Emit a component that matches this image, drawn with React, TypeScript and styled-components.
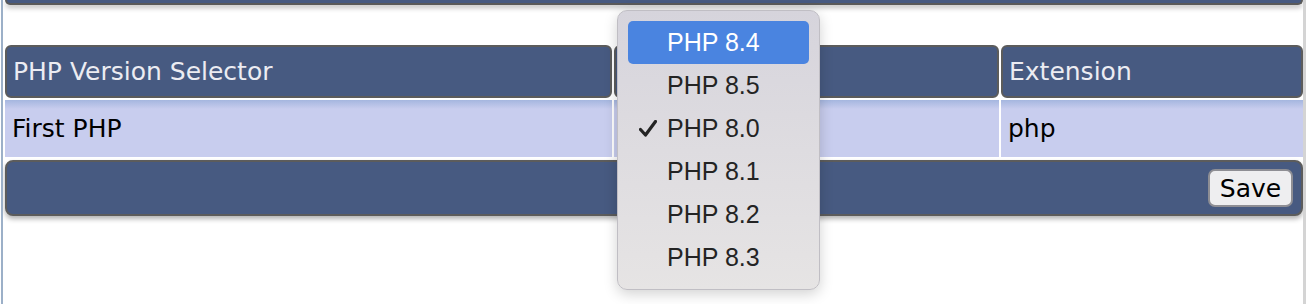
import styled, { createGlobalStyle } from 'styled-components';

const GlobalStyle = createGlobalStyle`
  html, body {
    margin: 0;
    padding: 0;
    background: #ffffff;
  }
  body {
    font-family: "DejaVu Sans", Verdana, sans-serif;
  }
`;

const versions = ['PHP 8.4', 'PHP 8.5', 'PHP 8.0', 'PHP 8.1', 'PHP 8.2', 'PHP 8.3'];
const highlighted = 'PHP 8.4';
const selected = 'PHP 8.0';

export default function App() {
  return (
    <>
      <GlobalStyle />
      <Frame>
        <TopBar />
        <Table>
          <HeadRow>
            <HeadCell>PHP Version Selector</HeadCell>
            <HeadCell />
            <HeadCell>Extension</HeadCell>
          </HeadRow>
          <DataRow>
            <DataCell>First PHP</DataCell>
            <DataCell />
            <DataCell>php</DataCell>
          </DataRow>
          <Footer>
            <SaveButton>Save</SaveButton>
          </Footer>
        </Table>

        <Menu>
          {versions.map((v) => (
            <MenuItem key={v} $active={v === highlighted}>
              {v === selected && (
                <Check viewBox="0 0 18 17">
                  <path d="M1.5 9.5 L6.5 15 L16.5 1.5" />
                </Check>
              )}
              {v}
            </MenuItem>
          ))}
        </Menu>
      </Frame>
    </>
  );
}

const Frame = styled.div`
  position: relative;
  margin-left: 1px;
  height: 304px;
  box-sizing: border-box;
  padding-left: 2px;
  border-left: 2px solid #9cb0c8;
  border-right: 3px solid #d4d4d4;
  overflow: hidden;
`;

const TopBar = styled.div`
  height: 3px;
  background: #475a81;
  border: 2px solid #5a5a5a;
  border-top: none;
  border-radius: 0 0 8px 8px;
  box-shadow: 0 3px 5px rgba(0, 0, 0, 0.25);
`;

const Table = styled.div`
  margin-top: 40px;
  display: flex;
  flex-direction: column;
`;

const HeadRow = styled.div`
  display: grid;
  grid-template-columns: 607px 385px 1fr;
  column-gap: 2px;
`;

const HeadCell = styled.div`
  height: 53px;
  box-sizing: border-box;
  display: flex;
  align-items: center;
  padding: 0 6px;
  background: #475a81;
  border: 2px solid #5c5c5c;
  border-radius: 6px;
  color: #ececf2;
  font-size: 25px;
  white-space: nowrap;
`;

const DataRow = styled.div`
  margin-top: 2px;
  display: grid;
  grid-template-columns: 607px 385px 1fr;
  column-gap: 2px;
  background: #ffffff;
`;

const DataCell = styled.div`
  height: 57px;
  box-sizing: border-box;
  display: flex;
  align-items: center;
  padding: 0 7px;
  background: linear-gradient(to bottom, #a5b6df 0px, #c8cdee 9px, #c8cdee 100%);
  color: #000000;
  font-size: 25px;
  white-space: nowrap;
`;

const Footer = styled.div`
  margin-top: 3px;
  height: 56px;
  box-sizing: border-box;
  display: flex;
  align-items: center;
  justify-content: flex-end;
  padding: 0 8px;
  background: #475a81;
  border: 2px solid #5c5c5c;
  border-radius: 8px;
  box-shadow: 0 3px 5px rgba(0, 0, 0, 0.3);
`;

const SaveButton = styled.button`
  width: 85px;
  height: 38px;
  box-sizing: border-box;
  font-family: "DejaVu Sans", Verdana, sans-serif;
  font-size: 25px;
  color: #000000;
  background: #eeeef0;
  border: 2px solid #8e8e94;
  border-radius: 7px;
  padding: 0;
`;

const Menu = styled.div`
  position: absolute;
  left: 614px;
  top: 10px;
  width: 203px;
  box-sizing: border-box;
  padding: 10px 10px;
  background: linear-gradient(to bottom, #d6d4dc, #e6e4e4);
  border: 1px solid #c0bec4;
  border-radius: 10px;
  box-shadow: 0 4px 14px rgba(0, 0, 0, 0.18);
  font-family: "Liberation Sans", Arial, sans-serif;
`;

const MenuItem = styled.div<{ $active: boolean }>`
  position: relative;
  height: 43px;
  display: flex;
  align-items: center;
  padding-left: 39px;
  border-radius: 5px;
  font-size: 25px;
  color: ${(p) => (p.$active ? '#ffffff' : '#242424')};
  background: ${(p) => (p.$active ? '#4a84e0' : 'transparent')};
`;

const Check = styled.svg`
  position: absolute;
  left: 11px;
  top: 13px;
  width: 18px;
  height: 17px;
  fill: none;
  stroke: #242424;
  stroke-width: 3.2;
  stroke-linecap: round;
  stroke-linejoin: round;
`;
